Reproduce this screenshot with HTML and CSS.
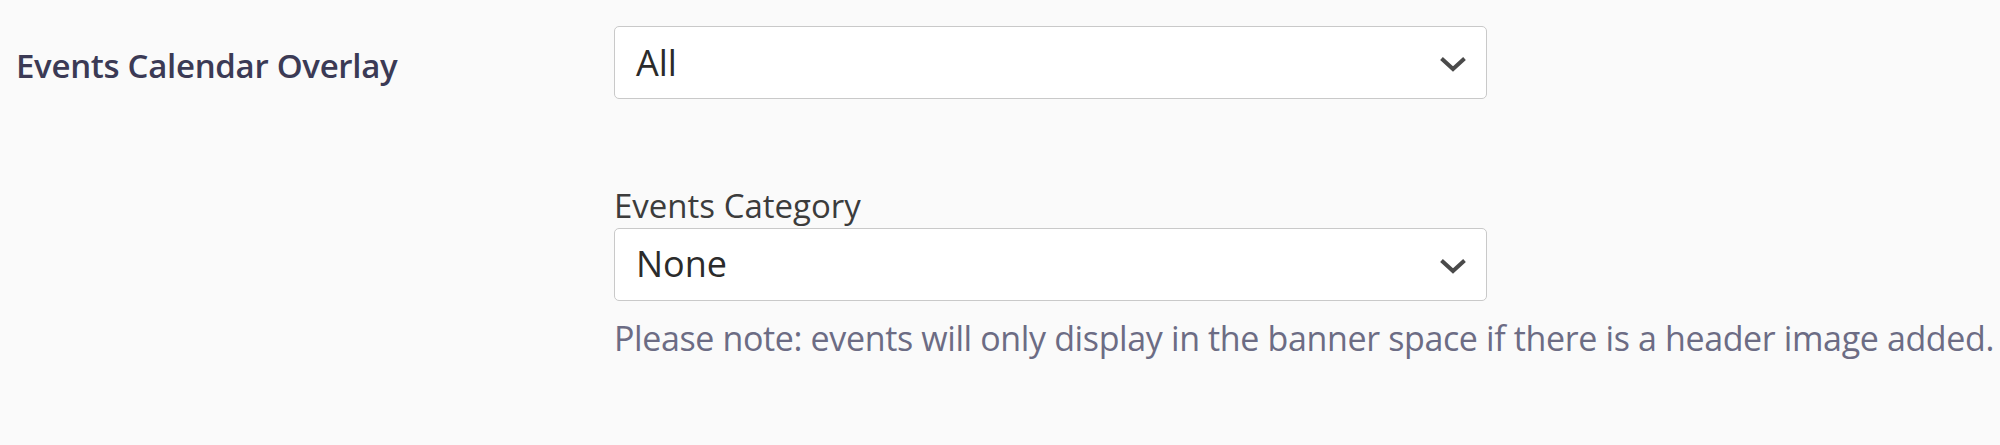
FILE: index.html
```html
<!DOCTYPE html>
<html lang="en">
<head>
<meta charset="utf-8">
<title>Events Calendar Overlay</title>
<link rel="stylesheet" href="styles.css">
</head>
<body>
<div class="form">
  <div class="row">
    <div class="row-label">Events Calendar Overlay</div>
    <div class="row-field">
      <div class="select">
        <span class="select-value">All</span>
        <svg class="chevron" viewBox="0 0 28 16" width="28" height="16" aria-hidden="true"><polyline points="2.5,2.5 14,13 25.5,2.5" fill="none" stroke="#4a4a4a" stroke-width="4" stroke-linejoin="miter"/></svg>
      </div>
    </div>
  </div>
  <div class="row row-sub">
    <div class="row-label"></div>
    <div class="row-field">
      <div class="field-label">Events Category</div>
      <div class="select">
        <span class="select-value">None</span>
        <svg class="chevron" viewBox="0 0 28 16" width="28" height="16" aria-hidden="true"><polyline points="2.5,2.5 14,13 25.5,2.5" fill="none" stroke="#4a4a4a" stroke-width="4" stroke-linejoin="miter"/></svg>
      </div>
      <p class="note">Please note: events will only display in the banner space if there is a header image added.</p>
    </div>
  </div>
</div>
</body>
</html>
```

FILE: styles.css
```css
html, body {
  margin: 0;
  padding: 0;
  background: #fafafa;
}
body {
  font-family: "Open Sans", "Noto Sans", sans-serif;
  width: 2000px;
  height: 445px;
  overflow: hidden;
}
.form {
  padding-top: 26px;
}
.row {
  display: grid;
  grid-template-columns: 614px 873px;
}
.row-label {
  padding-left: 16px;
  padding-top: 18px;
  font-size: 33px;
  line-height: 1.36;
  font-weight: 600;
  letter-spacing: -0.3px;
  color: #3b3a55;
  white-space: nowrap;
}
.row-sub {
  margin-top: 85px;
}
.field-label {
  font-size: 33px;
  line-height: 1.32;
  color: #3c3c3c;
  white-space: nowrap;
}
.select {
  box-sizing: border-box;
  height: 73px;
  border: 1.5px solid #c9c9c9;
  border-radius: 5px;
  background: #ffffff;
  display: flex;
  align-items: center;
  justify-content: space-between;
  padding: 0 19px 0 21px;
}
.select-value {
  font-size: 36px;
  color: #2b2b2b;
  line-height: 1;
}
.chevron {
  display: block;
  margin-top: 3px;
}
.note {
  margin: 14px 0 0 0;
  font-size: 34px;
  line-height: 1.4;
  letter-spacing: -0.37px;
  color: #6c6c84;
  white-space: nowrap;
}
```
